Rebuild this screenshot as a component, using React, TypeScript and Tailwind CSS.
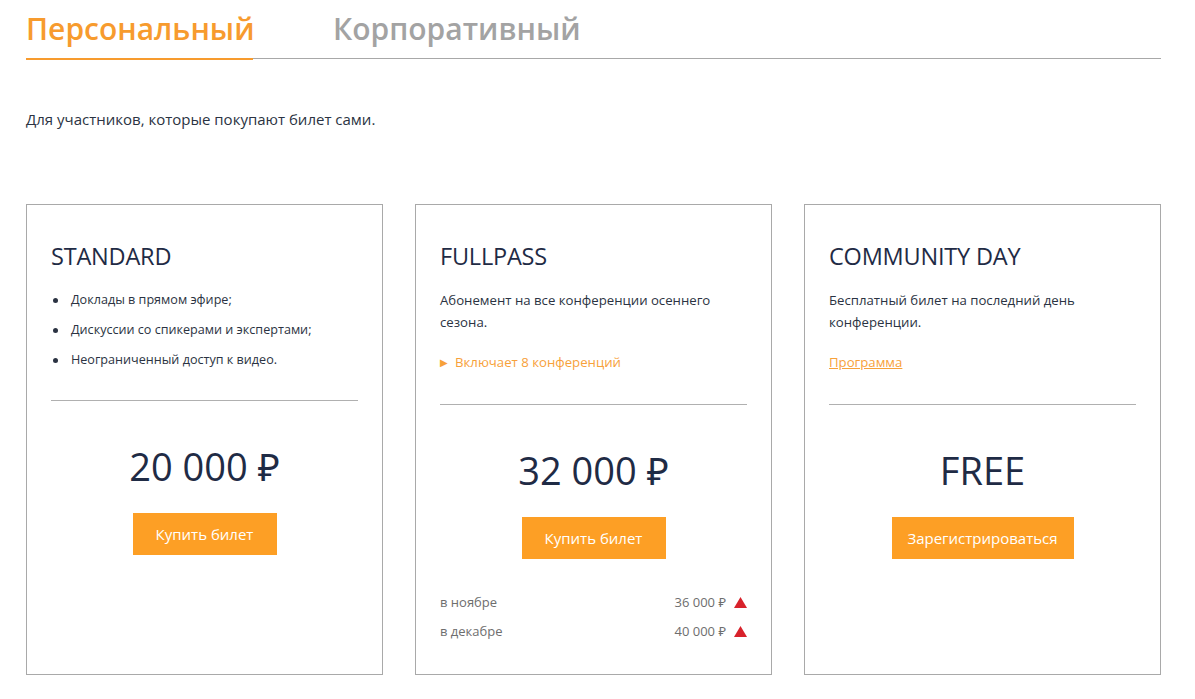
import React from "react";

const ORANGE = "text-[#f7a13a]";

function Card({ children }: { children: React.ReactNode }) {
  return (
    <div className="border border-[#a9a9a9] px-[24px] pt-[36px] pb-[32px] flex flex-col">
      {children}
    </div>
  );
}

function Title({ children }: { children: React.ReactNode }) {
  return <div className="text-[23.5px] leading-[30px] text-[#1f2b45] tracking-[-0.2px]">{children}</div>;
}

function Price({ children }: { children: React.ReactNode }) {
  return <div className="mt-[43px] text-center text-[38px] leading-[44px] text-[#1f2b45]">{children}</div>;
}

function Btn({ children, w }: { children: React.ReactNode; w: string }) {
  return (
    <div className="flex justify-center mt-[25px]">
      <button className={`${w} h-[42px] bg-[#fd9f25] text-white text-[15px]`}>{children}</button>
    </div>
  );
}

function Up() {
  return (
    <svg width="13" height="11" viewBox="0 0 13 11" className="ml-[8px]">
      <polygon points="6.5,0 13,11 0,11" fill="#d8222b" />
    </svg>
  );
}

export default function App() {
  return (
    <div className="bg-white min-h-[699px] pl-[26px] pr-[34px] pt-[9px]" style={{ fontFamily: '"Open Sans", "Noto Sans", sans-serif' }}>
      <div className="relative flex border-b border-[#a8a8a8]">
        <div className="relative w-[227px] text-[30px] font-semibold leading-[40px] pb-[9px] text-[#f79b2e]">
          Персональный
          <div className="absolute left-0 right-0 bottom-[-2px] h-[2px] bg-[#f79b2e]" />
        </div>
        <div className="ml-[80px] text-[30px] font-semibold leading-[40px] text-[#a3a3a3]">Корпоративный</div>
      </div>
      <p className="mt-[49px] text-[15px] leading-[22px] text-[#2b3342]">Для участников, которые покупают билет сами.</p>
      <div className="mt-[74px] grid grid-cols-3 gap-[32px]">
        <Card>
          <Title>STANDARD</Title>
          <ul className="mt-[18px] flex flex-col gap-[8px] text-[12.6px] leading-[22px] text-[#2b3342]">
            {["Доклады в прямом эфире;", "Дискуссии со спикерами и экспертами;", "Неограниченный доступ к видео."].map((t) => (
              <li key={t} className="flex items-center">
                <span className="w-[5px] h-[5px] rounded-full bg-[#2b3342] ml-[2px] mr-[13px]" />
                {t}
              </li>
            ))}
          </ul>
          <div className="mt-[29px] h-px bg-[#b0b0b0]" />
          <Price>20 000 ₽</Price>
          <Btn w="w-[144px]">Купить билет</Btn>
        </Card>
        <Card>
          <Title>FULLPASS</Title>
          <p className="mt-[18px] text-[13.2px] leading-[22px] text-[#2b3342] pr-[20px]">
            Абонемент на все конференции осеннего сезона.
          </p>
          <div className={`mt-[18px] text-[13.2px] leading-[22px] ${ORANGE} flex items-center`}>
            <span className="text-[10px] mr-[7px]">▶</span>Включает 8 конференций
          </div>
          <div className="mt-[31px] h-px bg-[#b0b0b0]" />
          <Price>32 000 ₽</Price>
          <Btn w="w-[144px]">Купить билет</Btn>
          <div className="mt-[32px] flex flex-col gap-[7px] text-[13px] leading-[22px] text-[#6e6e6e]">
            <div className="flex justify-between items-center">
              <span>в ноябре</span>
              <span className="flex items-center">36 000 ₽<Up /></span>
            </div>
            <div className="flex justify-between items-center">
              <span>в декабре</span>
              <span className="flex items-center">40 000 ₽<Up /></span>
            </div>
          </div>
        </Card>
        <Card>
          <Title>COMMUNITY DAY</Title>
          <p className="mt-[18px] text-[13.2px] leading-[22px] text-[#2b3342] pr-[40px]">
            Бесплатный билет на последний день конференции.
          </p>
          <div className="mt-[18px] text-[13.2px] leading-[22px]">
            <a className={`${ORANGE} underline`}>Программа</a>
          </div>
          <div className="mt-[31px] h-px bg-[#b0b0b0]" />
          <Price>FREE</Price>
          <Btn w="w-[182px]">Зарегистрироваться</Btn>
        </Card>
      </div>
    </div>
  );
}
